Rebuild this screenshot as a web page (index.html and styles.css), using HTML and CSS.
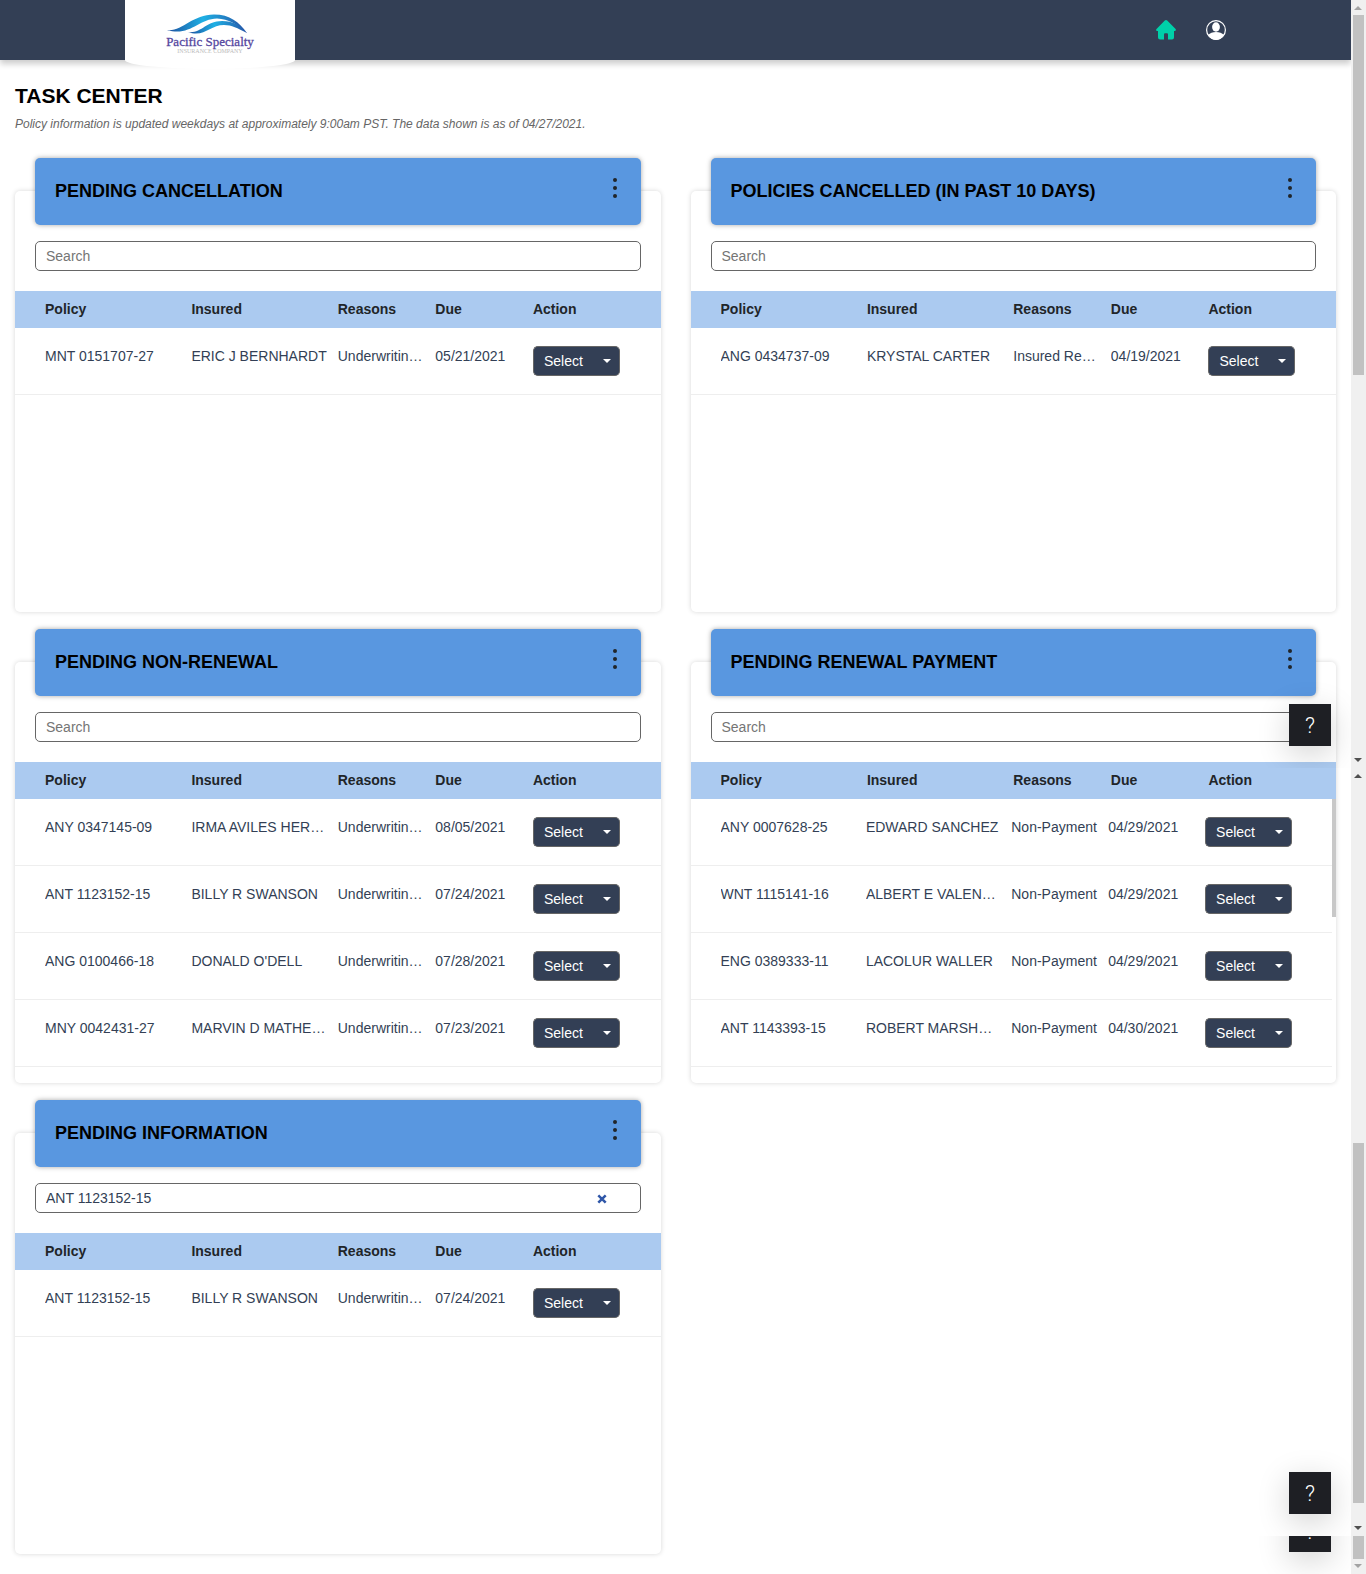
FILE: index.html
```html
<!DOCTYPE html>
<html lang="en">
<head>
<meta charset="utf-8">
<title>Task Center</title>
<link rel="stylesheet" href="styles.css">
</head>
<body>
<header class="topbar">
  <a class="brand" href="#" aria-label="Pacific Specialty Insurance Company">
    <svg class="brand-logo" viewBox="0 0 100 46" width="100" height="46">
      <defs>
        <linearGradient id="wave" x1="0" x2="1" y1="0" y2="0">
          <stop offset="0" stop-color="#1d4f9e"/>
          <stop offset=".45" stop-color="#1fb0e4"/>
          <stop offset="1" stop-color="#2553a6"/>
        </linearGradient>
      </defs>
      <path fill="url(#wave)" d="M7 20C22 22 32 4.500 54 4.500C70 4.500 79 12 87 23C76 14 69 9 57 8.500C38 9 30 27 7 20Z"/>
      <path fill="url(#wave)" d="M28 22C41 24 46 11 62 11C73 11 80 15 87 23C77 18 72 15 64 15C50 15 44 28 28 22Z"/>
      <text class="brand-name" x="50" y="36" text-anchor="middle">Pacific Specialty</text>
      <text class="brand-sub" x="50" y="43" text-anchor="middle">INSURANCE COMPANY</text>
    </svg>
  </a>
  <nav class="topnav">
    <a href="#" aria-label="Home">
      <svg viewBox="0 0 20 20" width="20" height="20"><path fill="#00d0a9" d="M8.800.6Q10-.5 11.200.6L19.600 9Q20.400 10.100 19.200 11H18V17.500Q18 19.600 16 19.600H12V14.500Q12 13.300 11 13.300H9Q8 13.300 8 14.500V19.600H4.200Q2 19.600 2 17.500V11H.8Q-.4 10.100.5 9Z"/></svg>
    </a>
    <a href="#" aria-label="Account">
      <svg viewBox="0 0 20 20" width="20" height="20"><circle cx="10" cy="10" r="9.400" fill="none" stroke="#fff" stroke-width="1.200"/><ellipse cx="10" cy="7" rx="3.900" ry="4.700" fill="#fff"/><path fill="#fff" d="M2 15Q5 12 10 12T18 15Q15 20 10 20T2 15Z"/></svg>
    </a>
  </nav>
</header>

<main class="content">
  <h1 class="title">TASK CENTER</h1>
  <p class="note">Policy information is updated weekdays at approximately 9:00am PST. The data shown is as of 04/27/2021.</p>

  <div class="cards">
    <section class="card">
      <div class="card-head"><h2>PENDING CANCELLATION</h2><button class="menu" aria-label="Menu"><i></i><i></i><i></i></button></div>
      <div class="search"><input type="text" placeholder="Search" aria-label="Search pending cancellation"></div>
      <table class="grid">
        <thead><tr><th>Policy</th><th>Insured</th><th>Reasons</th><th>Due</th><th>Action</th></tr></thead>
        <tbody>
          <tr><td>MNT 0151707-27</td><td>ERIC J BERNHARDT</td><td>Underwriting Reasons</td><td>05/21/2021</td><td><div class="split"><button>Select</button><button class="caret" aria-label="More actions"></button></div></td></tr>
        </tbody>
      </table>
    </section>

    <section class="card">
      <div class="card-head"><h2>POLICIES CANCELLED (IN PAST 10 DAYS)</h2><button class="menu" aria-label="Menu"><i></i><i></i><i></i></button></div>
      <div class="search"><input type="text" placeholder="Search" aria-label="Search policies cancelled"></div>
      <table class="grid">
        <thead><tr><th>Policy</th><th>Insured</th><th>Reasons</th><th>Due</th><th>Action</th></tr></thead>
        <tbody>
          <tr><td>ANG 0434737-09</td><td>KRYSTAL CARTER</td><td>Insured Request</td><td>04/19/2021</td><td><div class="split"><button>Select</button><button class="caret" aria-label="More actions"></button></div></td></tr>
        </tbody>
      </table>
    </section>

    <section class="card">
      <div class="card-head"><h2>PENDING NON-RENEWAL</h2><button class="menu" aria-label="Menu"><i></i><i></i><i></i></button></div>
      <div class="search"><input type="text" placeholder="Search" aria-label="Search pending non-renewal"></div>
      <table class="grid">
        <thead><tr><th>Policy</th><th>Insured</th><th>Reasons</th><th>Due</th><th>Action</th></tr></thead>
        <tbody>
          <tr><td>ANY 0347145-09</td><td>IRMA AVILES HERNANDEZ</td><td>Underwriting Reasons</td><td>08/05/2021</td><td><div class="split"><button>Select</button><button class="caret" aria-label="More actions"></button></div></td></tr>
          <tr><td>ANT 1123152-15</td><td>BILLY R SWANSON</td><td>Underwriting Reasons</td><td>07/24/2021</td><td><div class="split"><button>Select</button><button class="caret" aria-label="More actions"></button></div></td></tr>
          <tr><td>ANG 0100466-18</td><td>DONALD O'DELL</td><td>Underwriting Reasons</td><td>07/28/2021</td><td><div class="split"><button>Select</button><button class="caret" aria-label="More actions"></button></div></td></tr>
          <tr><td>MNY 0042431-27</td><td>MARVIN D MATHEWS</td><td>Underwriting Reasons</td><td>07/23/2021</td><td><div class="split"><button>Select</button><button class="caret" aria-label="More actions"></button></div></td></tr>
        </tbody>
      </table>
    </section>

    <section class="card">
      <div class="card-head"><h2>PENDING RENEWAL PAYMENT</h2><button class="menu" aria-label="Menu"><i></i><i></i><i></i></button></div>
      <div class="search"><input type="text" placeholder="Search" aria-label="Search pending renewal payment"></div>
      <table class="grid scrolls">
        <thead><tr><th>Policy</th><th>Insured</th><th>Reasons</th><th>Due</th><th>Action</th></tr></thead>
        <tbody>
          <tr><td>ANY 0007628-25</td><td>EDWARD SANCHEZ</td><td>Non-Payment</td><td>04/29/2021</td><td><div class="split"><button>Select</button><button class="caret" aria-label="More actions"></button></div></td></tr>
          <tr><td>WNT 1115141-16</td><td>ALBERT E VALENZUELA</td><td>Non-Payment</td><td>04/29/2021</td><td><div class="split"><button>Select</button><button class="caret" aria-label="More actions"></button></div></td></tr>
          <tr><td>ENG 0389333-11</td><td>LACOLUR WALLER</td><td>Non-Payment</td><td>04/29/2021</td><td><div class="split"><button>Select</button><button class="caret" aria-label="More actions"></button></div></td></tr>
          <tr><td>ANT 1143393-15</td><td>ROBERT MARSHALL</td><td>Non-Payment</td><td>04/30/2021</td><td><div class="split"><button>Select</button><button class="caret" aria-label="More actions"></button></div></td></tr>
        </tbody>
      </table>
    </section>

    <section class="card">
      <div class="card-head"><h2>PENDING INFORMATION</h2><button class="menu" aria-label="Menu"><i></i><i></i><i></i></button></div>
      <div class="search"><input type="text" placeholder="Search" value="ANT 1123152-15" aria-label="Search pending information"><button class="clear" aria-label="Clear search"><svg viewBox="0 0 10 10" width="10" height="10"><path d="M1.300 1.300L8.700 8.700M8.700 1.300L1.300 8.700" stroke="#2f57a8" stroke-width="2.500"/></svg></button></div>
      <table class="grid">
        <thead><tr><th>Policy</th><th>Insured</th><th>Reasons</th><th>Due</th><th>Action</th></tr></thead>
        <tbody>
          <tr><td>ANT 1123152-15</td><td>BILLY R SWANSON</td><td>Underwriting Reasons</td><td>07/24/2021</td><td><div class="split"><button>Select</button><button class="caret" aria-label="More actions"></button></div></td></tr>
        </tbody>
      </table>
    </section>
  </div>
</main>

<div class="frames">
  <div class="frame">
    <button class="help">?</button>
    <div class="rail"><span class="arrow up dim"></span><span class="track"><span class="thumb"></span></span><span class="arrow down"></span></div>
  </div>
  <div class="frame">
    <button class="help">?</button>
    <div class="rail"><span class="arrow up"></span><span class="track end"><span class="thumb"></span></span><span class="arrow down"></span></div>
  </div>
  <div class="frame rest">
    <button class="help">?</button>
    <div class="rail"><span class="track"><span class="thumb fill"></span></span><span class="arrow down dim"></span></div>
  </div>
</div>
</body>
</html>
```

FILE: styles.css
```css
* { box-sizing: border-box; }

body {
  margin: 0;
  position: relative;
  padding-right: 15px;
  background: #fff;
  color: #333f55;
  font: 14px/21px "Liberation Sans", Arial, sans-serif;
}

button, input { font: inherit; margin: 0; }

/* top bar */
.topbar {
  display: flex;
  justify-content: space-between;
  height: 60px;
  padding: 0 125px;
  background: #333f55;
  box-shadow: 0 4px 6px rgba(0, 0, 0, .2);
}
.brand {
  width: 170px;
  height: 69px;
  padding: 10px 35px;
  background: #fff;
  border-radius: 0 0 50% 50% / 0 0 9px 9px;
}
.brand-logo { display: block; }
.brand-name {
  font: 13px "Liberation Serif", "Times New Roman", serif;
  fill: #5648a0;
  stroke: #5648a0;
  stroke-width: .3px;
}
.brand-sub {
  font: 6px "Liberation Serif", "Times New Roman", serif;
  fill: #bbb;
}
.topnav { display: flex; align-items: center; gap: 30px; }
.topnav svg { display: block; }

/* page heading */
.content { padding: 21px 15px 20px; }
.title {
  margin: 0;
  font-size: 21px;
  line-height: 30px;
  color: #000;
}
.note {
  margin: 4px 0 0;
  font-size: 12px;
  line-height: 18px;
  font-style: italic;
  color: #666;
}

/* cards */
.cards {
  display: grid;
  grid-template-columns: repeat(2, minmax(0, 1fr));
  gap: 50px 30px;
  padding-top: 58px;
}
.card {
  min-height: 421px;
  background: #fff;
  border-radius: 5px;
  box-shadow: 0 0 5px rgba(0, 0, 0, .16);
}
.card-head {
  display: flex;
  justify-content: space-between;
  align-items: flex-start;
  height: 67px;
  margin: -33px 20px 16px;
  padding: 20px;
  background: #5997e0;
  border-radius: 5px;
  box-shadow: 0 0 5px rgba(0, 0, 0, .35);
}
.card-head h2 {
  margin: 0;
  font-size: 18px;
  line-height: 27px;
  color: #000;
}
.menu {
  display: flex;
  flex-direction: column;
  gap: 4px;
  padding: 0 4px;
  border: 0;
  background: none;
}
.menu i {
  width: 4px;
  height: 4px;
  border-radius: 50%;
  background: #212529;
}
.search {
  position: relative;
  margin: 0 20px 20px;
}
.search input {
  display: block;
  width: 100%;
  height: 30px;
  padding: 0 10px;
  border: 1px solid #666;
  border-radius: 5px;
  background: #fff;
  color: #333f55;
}
.search input::placeholder { color: #757575; }
.clear {
  position: absolute;
  top: 11px;
  right: 34px;
  padding: 0;
  border: 0;
  background: none;
}
.clear svg { display: block; }

/* tables */
.grid, .grid thead, .grid tbody { display: block; }
.grid tr {
  display: grid;
  grid-template-columns: 3fr 3fr 2fr 2fr 2fr;
  padding: 0 30px;
}
.grid th, .grid td {
  min-width: 0;
  padding: 0 10px 0 0;
  text-align: left;
  white-space: nowrap;
  overflow: hidden;
  text-overflow: ellipsis;
}
.grid thead { background: #abcaf0; color: #212529; }
.grid thead tr { padding: 8px 30px; }
.grid tbody tr {
  height: 67px;
  padding: 18px 30px;
  border-bottom: 1px solid #eee;
}
.grid td:last-child { padding: 0; overflow: visible; }
.scrolls tbody {
  padding-right: 4px;
  background: linear-gradient(#c8c8c8, #c8c8c8) right top / 4px 118px no-repeat;
}

.split { display: inline-flex; height: 30px; }
.split button {
  padding: 0 10px;
  border: 1px solid #666;
  border-right: 0;
  border-radius: 5px 0 0 5px;
  background: #333f55;
  color: #fff;
}
.split .caret {
  display: flex;
  align-items: center;
  padding: 0 8px 0 10px;
  border-left: 0;
  border-right: 1px solid #666;
  border-radius: 0 5px 5px 0;
}
.caret::after {
  content: "";
  border: 4px solid transparent;
  border-top-color: #fff;
  border-bottom: 0;
}

/* help buttons and scroll bars over the page */
.frames {
  position: absolute;
  inset: 0;
  display: flex;
  flex-direction: column;
  pointer-events: none;
}
.frame {
  display: flex;
  justify-content: flex-end;
  align-items: flex-end;
  flex: 0 0 768px;
  overflow: hidden;
}
.frame.rest { flex: 1 1 0; min-height: 0; }
.help {
  flex: none;
  width: 42px;
  height: 42px;
  margin: 0 20px 22px 0;
  padding: 2px 0 0;
  border: 0;
  background: #1e1f24;
  color: #fff;
  font: 300 22px/40px Roboto, sans-serif;
  box-shadow: 0 8px 32px rgba(0, 0, 0, .18);
  pointer-events: auto;
}
.rail {
  display: flex;
  flex-direction: column;
  align-self: stretch;
  width: 15px;
  background: #f0f0f0;
}
.arrow {
  display: flex;
  align-items: center;
  justify-content: center;
  height: 15px;
  padding: 0 1px 1px 0;
  color: #505050;
}
.arrow::after {
  content: "";
  border: 4px solid transparent;
}
.arrow.up { padding-bottom: 0; }
.arrow.dim { color: #a3a3a3; }
.arrow.up::after { border-bottom-color: currentColor; border-top: 0; }
.arrow.down::after { border-top-color: currentColor; border-bottom: 0; }
.track {
  display: flex;
  flex-direction: column;
  flex: 1;
  padding: 0 2px;
}
.track.end { justify-content: flex-end; padding-bottom: 18px; }
.thumb { height: 360px; background: #c1c1c1; }
.thumb.fill { height: auto; flex: 1; }
```
